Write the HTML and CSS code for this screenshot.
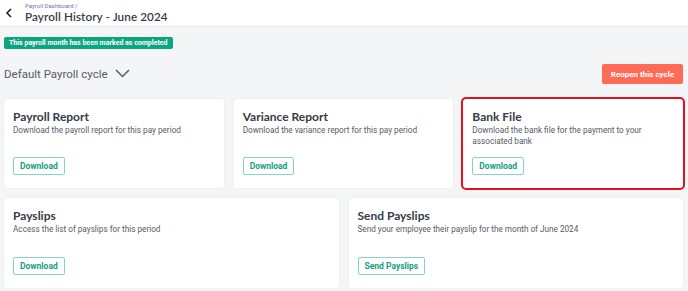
FILE: index.html
```html
<!DOCTYPE html>
<html lang="en">
<head>
<meta charset="utf-8">
<title>Payroll History - June 2024</title>
<link rel="stylesheet" href="styles.css">
</head>
<body>
<header class="topbar">
  <button class="back" aria-label="Back">
    <svg width="8" height="10" viewBox="0 0 8 10"><path d="M6 1 L2 5 L6 9" fill="none" stroke="#222" stroke-width="1.6"/></svg>
  </button>
  <div class="titles">
    <div class="crumb">Payroll Dashboard /</div>
    <h1 class="title">Payroll History - June 2024</h1>
  </div>
</header>
<main class="page">
  <div class="badge">This payroll month has been marked as completed</div>
  <div class="cycle-row">
    <div class="cycle">Default Payroll cycle
      <svg class="chev" width="15" height="9" viewBox="0 0 15 9"><path d="M1 1 L7.5 7.5 L14 1" fill="none" stroke="#555b66" stroke-width="1.5"/></svg>
    </div>
    <button class="reopen">Reopen this cycle</button>
  </div>
  <section class="row three">
    <div class="card">
      <h2>Payroll Report</h2>
      <p>Download the payroll report for this pay period</p>
      <button class="btn">Download</button>
    </div>
    <div class="card">
      <h2>Variance Report</h2>
      <p>Download the variance report for this pay period</p>
      <button class="btn">Download</button>
    </div>
    <div class="card highlight">
      <h2>Bank File</h2>
      <p>Download the bank file for the payment to your associated bank</p>
      <button class="btn">Download</button>
    </div>
  </section>
  <section class="row two">
    <div class="card">
      <h2>Payslips</h2>
      <p>Access the list of payslips for this period</p>
      <button class="btn">Download</button>
    </div>
    <div class="card">
      <h2>Send Payslips</h2>
      <p>Send your employee their payslip for the month of June 2024</p>
      <button class="btn">Send Payslips</button>
    </div>
  </section>
</main>
</body>
</html>
```
FILE: styles.css
```css
* { box-sizing: border-box; }
html, body { margin: 0; padding: 0; }
body {
  background: #f4f5f7;
  font-family: Roboto, "Liberation Sans", sans-serif;
  color: #4a4f5a;
  overflow: hidden;
}
button { font-family: Roboto, "Liberation Sans", sans-serif; cursor: pointer; }

.topbar {
  height: 27px;
  background: #fff;
  border-bottom: 1px solid #e8e9ec;
  display: flex;
  align-items: flex-start;
}
.back {
  border: 0;
  background: none;
  padding: 0;
  margin: 7px 0 0 4px;
  width: 10px;
  height: 12px;
  display: flex;
  align-items: center;
  justify-content: center;
}
.titles { margin-left: 11px; padding-top: 2px; }
.crumb {
  font-size: 6px;
  line-height: 7px;
  color: #8a63b8;
}
.title {
  margin: 0;
  font-family: Lato, "Open Sans", sans-serif;
  font-weight: 600;
  font-size: 11.7px;
  line-height: 15px;
  color: #363c4a;
  letter-spacing: 0.1px;
}

.page { padding: 10px 5px 0 4px; display: flex; flex-direction: column; align-items: stretch; }
.badge {
  align-self: flex-start;
  background: #0ba57f;
  color: #fff;
  font-weight: 700;
  font-size: 7px;
  line-height: 12px;
  padding: 0 5px;
  border-radius: 2px;
}
.cycle-row {
  display: flex;
  justify-content: space-between;
  align-items: center;
  margin-top: 14px;
  height: 21px;
}
.cycle {
  font-size: 11.5px;
  color: #555b66;
  display: flex;
  align-items: center;
}
.chev { margin-left: 7px; }
.reopen {
  background: #ff6b57;
  color: #fff;
  border: 0;
  border-radius: 2px;
  font-weight: 700;
  font-size: 8px;
  height: 20px;
  width: 81px;
  padding: 0;
  margin-top: 1px;
}

.row { display: grid; gap: 10px; }
.row.three { grid-template-columns: 1fr 1fr 1fr; margin-top: 15px; }
.row.two { grid-template-columns: 1fr 1fr; margin-top: 10px; }
.row.three .card { height: 89px; }
.row.two .card { height: 90px; }

.card {
  background: #fff;
  border-radius: 3px;
  box-shadow: 0 0 2px rgba(0,0,0,0.08);
  padding: 10px 9px 13px;
  display: flex;
  flex-direction: column;
  align-items: flex-start;
}
.card h2 {
  margin: 0;
  font-family: Lato, "Open Sans", sans-serif;
  font-weight: 700;
  font-size: 12px;
  line-height: 16px;
  color: #353b48;
}
.card p {
  margin: 0;
  font-size: 8.2px;
  line-height: 11px;
  color: #555b66;
}
.btn {
  margin-top: auto;
  background: #fff;
  border: 1px solid #86d5c3;
  border-radius: 2px;
  color: #14a07c;
  font-weight: 700;
  font-size: 8.5px;
  height: 18px;
  padding: 0 6px;
}
.card.highlight {
  outline: 2.5px solid #e3101e;
  outline-offset: 0;
}
```
